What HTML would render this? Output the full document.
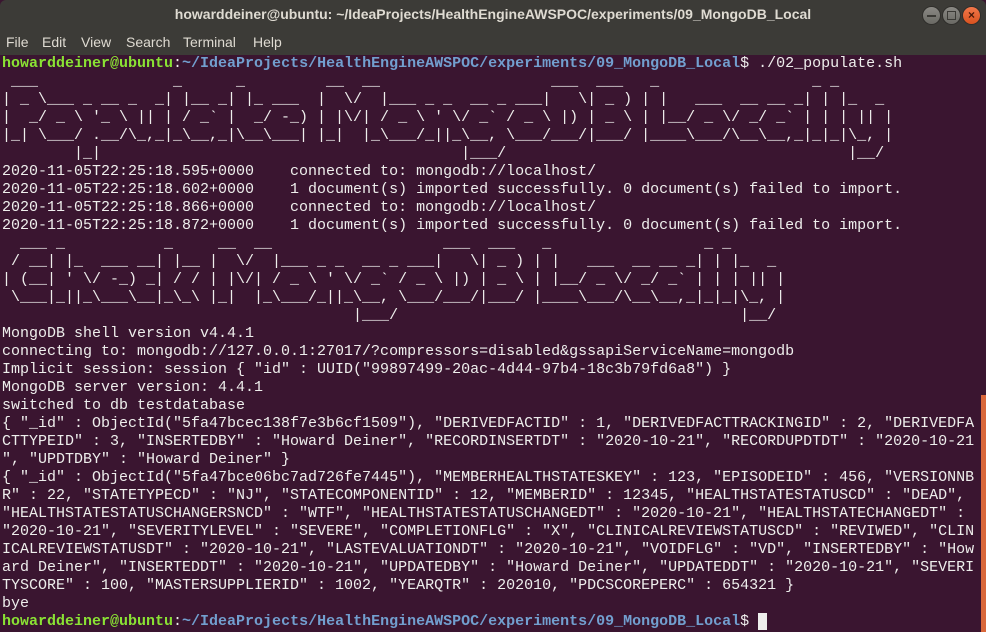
<!DOCTYPE html>
<html><head><meta charset="utf-8"><style>
html,body{margin:0;padding:0;width:986px;height:632px;overflow:hidden;background:#3a1530;}
#title{position:absolute;left:0;top:0;width:986px;height:29px;background:#3c3b37;border-radius:6px 6px 0 0;}
#title .t{position:absolute;left:0;right:0;top:6px;text-align:center;font:bold 14px "Liberation Sans",sans-serif;color:#dfdbd2;}
.btn{position:absolute;top:7px;width:17px;height:17px;border-radius:50%;background:linear-gradient(#8a8984,#6a6964);box-shadow:0 0 0 1px #2f2e2b;}
.btn.c{background:linear-gradient(#f2774a,#d9521f);}
#menu{position:absolute;left:0;top:29px;width:986px;height:26px;background:#3c3b37;font:14px "Liberation Sans",sans-serif;color:#dfdbd2;}
#menu span{position:absolute;top:5px;}
#term{position:absolute;left:2px;top:55px;font:15px/18px "Liberation Mono",monospace;color:#eeeeec;white-space:normal;}
#term div{height:18px;white-space:pre;}
.g{color:#8ae234;font-weight:bold;}
.b{color:#729fcf;font-weight:bold;}
#sb{position:absolute;left:981px;top:395px;width:5px;height:237px;background:#d9673a;}
#cur{display:inline-block;width:9px;height:17px;background:#eeeeec;vertical-align:top;}
</style></head><body>
<div id="title"><div class="t">howarddeiner@ubuntu: ~/IdeaProjects/HealthEngineAWSPOC/experiments/09_MongoDB_Local</div>
<div class="btn" style="left:923px"><div style="position:absolute;left:4px;top:8px;width:9px;height:1.5px;background:#3a3935"></div></div>
<div class="btn" style="left:943px"><div style="position:absolute;left:4px;top:4px;width:7px;height:7px;border:1.5px solid #3a3935"></div></div>
<div class="btn c" style="left:963px"><div style="position:absolute;left:0;top:0;width:17px;text-align:center;font:bold 12px/17px 'Liberation Sans',sans-serif;color:#4a1a0a">×</div></div>
</div>
<div id="menu"><span style="left:6px">File</span><span style="left:42px">Edit</span><span style="left:81px">View</span><span style="left:126px">Search</span><span style="left:183px">Terminal</span><span style="left:253px">Help</span></div>
<div id="term"><div><span class="g">howarddeiner@ubuntu</span>:<span class="b">~/IdeaProjects/HealthEngineAWSPOC/experiments/09_MongoDB_Local</span>$ ./02_populate.sh</div><div> ___               _      _         __  __                   ___  ___   _                 _ _</div><div>| _ \___ _ __ _  _| |__ _| |_ ___  |  \/  |___ _ _  __ _ ___|   \| _ ) | |   ___  __ __ _| | |_  _ </div><div>|  _/ _ \ '_ \ || | / _` |  _/ -_) | |\/| / _ \ ' \/ _` / _ \ |) | _ \ | |__/ _ \/ _/ _` | | | || |</div><div>|_| \___/ .__/\_,_|_\__,_|\__\___| |_|  |_\___/_||_\__, \___/___/|___/ |____\___/\__\__,_|_|_|\_, |</div><div>        |_|                                        |___/                                      |__/</div><div>2020-11-05T22:25:18.595+0000    connected to: mongodb://localhost/</div><div>2020-11-05T22:25:18.602+0000    1 document(s) imported successfully. 0 document(s) failed to import.</div><div>2020-11-05T22:25:18.866+0000    connected to: mongodb://localhost/</div><div>2020-11-05T22:25:18.872+0000    1 document(s) imported successfully. 0 document(s) failed to import.</div><div>  ___ _           _     __  __                   ___  ___   _                 _ _</div><div> / __| |_  ___ __| |__ |  \/  |___ _ _  __ _ ___|   \| _ ) | |   ___  __ __ _| | |_  _ </div><div>| (__| ' \/ -_) _| / / | |\/| / _ \ ' \/ _` / _ \ |) | _ \ | |__/ _ \/ _/ _` | | | || |</div><div> \___|_||_\___\__|_\_\ |_|  |_\___/_||_\__, \___/___/|___/ |____\___/\__\__,_|_|_|\_, |</div><div>                                       |___/                                      |__/</div><div>MongoDB shell version v4.4.1</div><div>connecting to: mongodb://127.0.0.1:27017/?compressors=disabled&amp;gssapiServiceName=mongodb</div><div>Implicit session: session { "id" : UUID("99897499-20ac-4d44-97b4-18c3b79fd6a8") }</div><div>MongoDB server version: 4.4.1</div><div>switched to db testdatabase</div><div>{ "_id" : ObjectId("5fa47bcec138f7e3b6cf1509"), "DERIVEDFACTID" : 1, "DERIVEDFACTTRACKINGID" : 2, "DERIVEDFA</div><div>CTTYPEID" : 3, "INSERTEDBY" : "Howard Deiner", "RECORDINSERTDT" : "2020-10-21", "RECORDUPDTDT" : "2020-10-21</div><div>", "UPDTDBY" : "Howard Deiner" }</div><div>{ "_id" : ObjectId("5fa47bce06bc7ad726fe7445"), "MEMBERHEALTHSTATESKEY" : 123, "EPISODEID" : 456, "VERSIONNB</div><div>R" : 22, "STATETYPECD" : "NJ", "STATECOMPONENTID" : 12, "MEMBERID" : 12345, "HEALTHSTATESTATUSCD" : "DEAD",</div><div>"HEALTHSTATESTATUSCHANGERSNCD" : "WTF", "HEALTHSTATESTATUSCHANGEDT" : "2020-10-21", "HEALTHSTATECHANGEDT" :</div><div>"2020-10-21", "SEVERITYLEVEL" : "SEVERE", "COMPLETIONFLG" : "X", "CLINICALREVIEWSTATUSCD" : "REVIWED", "CLIN</div><div>ICALREVIEWSTATUSDT" : "2020-10-21", "LASTEVALUATIONDT" : "2020-10-21", "VOIDFLG" : "VD", "INSERTEDBY" : "How</div><div>ard Deiner", "INSERTEDDT" : "2020-10-21", "UPDATEDBY" : "Howard Deiner", "UPDATEDDT" : "2020-10-21", "SEVERI</div><div>TYSCORE" : 100, "MASTERSUPPLIERID" : 1002, "YEARQTR" : 202010, "PDCSCOREPERC" : 654321 }</div><div>bye</div><div><span class="g">howarddeiner@ubuntu</span>:<span class="b">~/IdeaProjects/HealthEngineAWSPOC/experiments/09_MongoDB_Local</span>$ <span id="cur"></span></div></div>
<div id="sb"></div>
</body></html>
